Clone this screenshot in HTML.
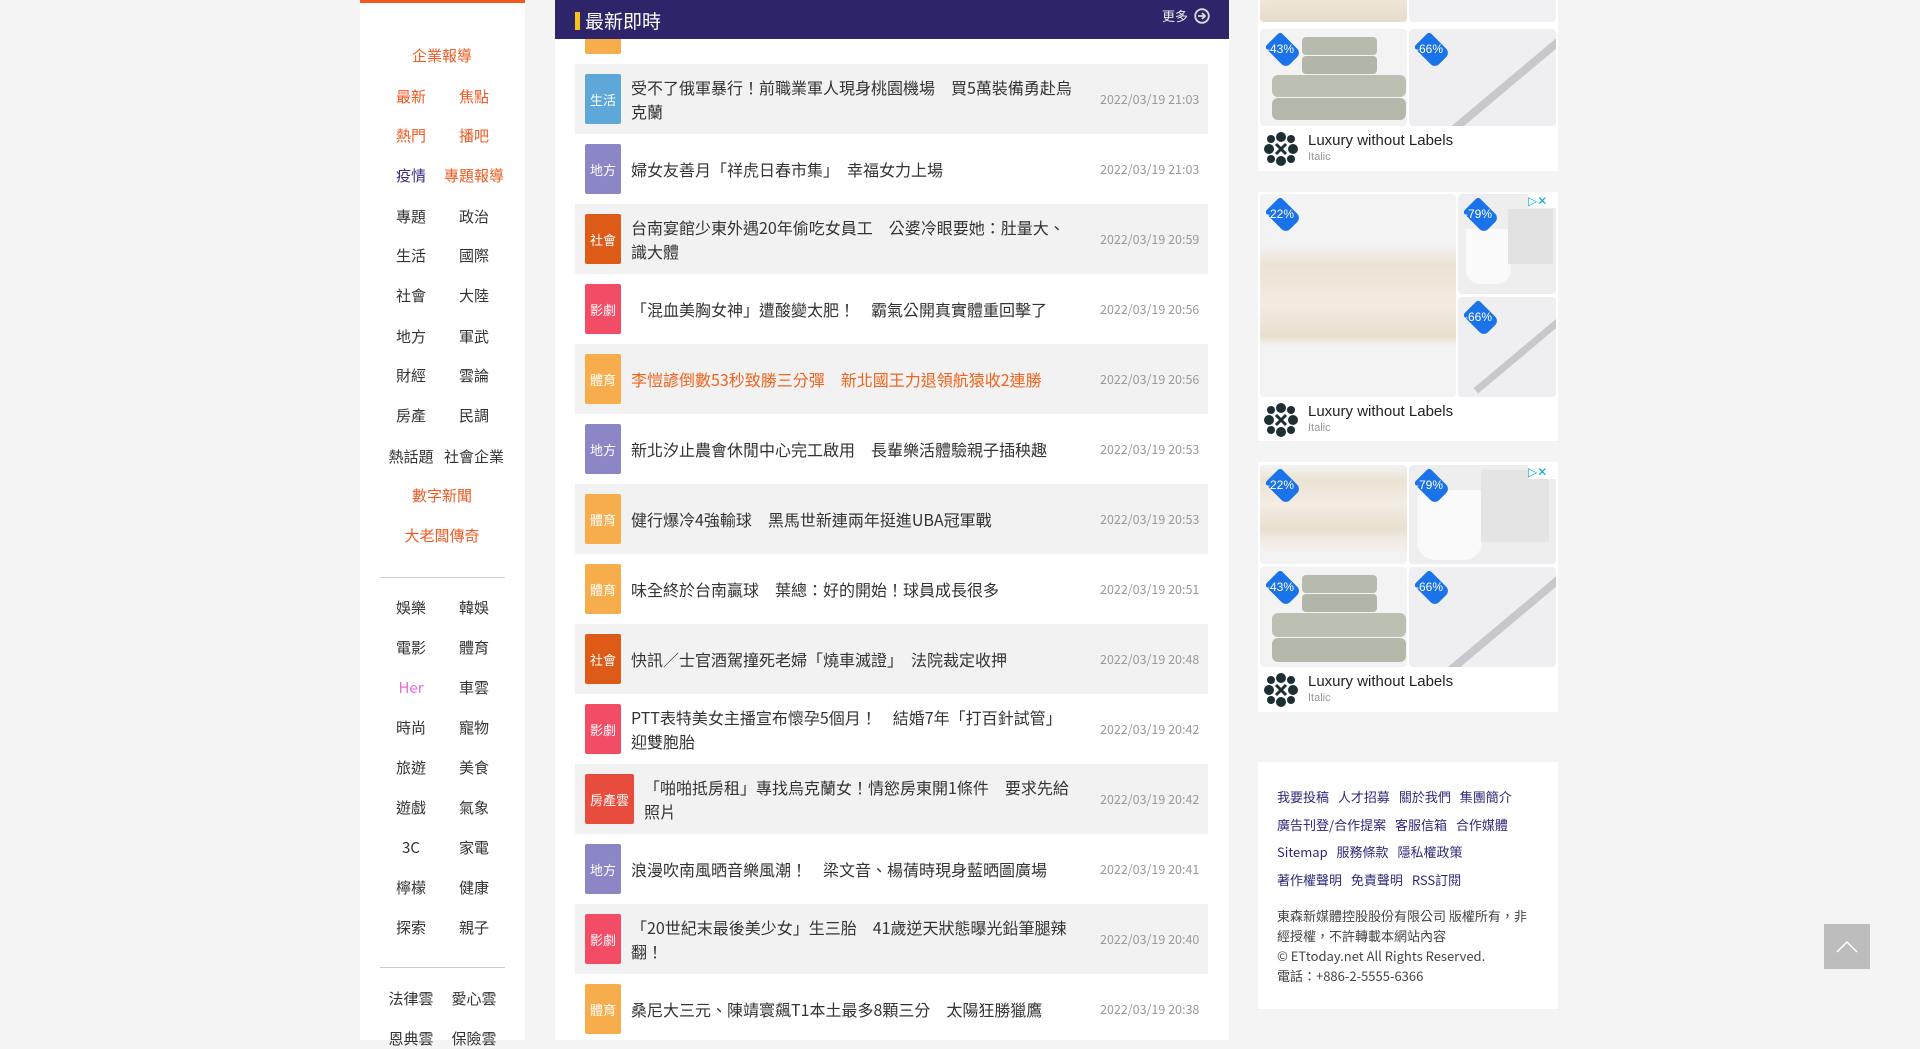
<!DOCTYPE html>
<html><head><meta charset="utf-8"><style>
*{margin:0;padding:0;box-sizing:border-box}
body{width:1920px;height:1040px;overflow:hidden;background:#f4f4f4;font-family:"Noto Sans CJK TC","Liberation Sans",sans-serif;position:relative}
.abs{position:absolute}
#side{left:360px;top:0;width:165px;height:1040px;background:#fff}
#side .bar{left:0;top:0;width:165px;height:3px;background:#f05a1e}
.si{position:absolute;font-size:15px;line-height:20px;color:#333;transform:translate(-50%,-50%);white-space:nowrap}
.or{color:#ef5a22}.pu{color:#3a2d84}.pk{color:#e96ae0}
.hr{position:absolute;left:20px;width:125px;height:1px;background:#ccc}
#main{left:555px;top:0;width:674px;height:1040px;background:#fff}
#hd{left:0;top:0;width:674px;height:39px;background:#2d2469}
#hd .yb{left:20px;top:12px;width:5px;height:18px;background:#f7c21b}
#hd .t{left:30px;top:9px;color:#fff;font-size:19px;line-height:24px}
#hd .more{left:607px;top:7px;color:#eee;font-size:13px;line-height:18px}
.row{position:absolute;left:20px;width:633px;height:70px}
.row.g{background:#f2f2f2}
.tag{position:absolute;left:10px;top:10px;width:36px;height:50px;border-radius:2px;color:#fff;font-size:13px;display:flex;align-items:center;justify-content:center}
.tt{position:absolute;left:56px;font-size:16px;line-height:24px;color:#333;white-space:nowrap}
.dt{position:absolute;left:525px;top:26px;font-size:12.5px;line-height:18px;color:#999;white-space:nowrap}
.ad{position:absolute;left:1258px;width:300px;background:#fff}
.im{position:absolute;overflow:hidden;border-radius:4px;background:#efeff2}
.tg{position:absolute;left:4px;top:4px;width:36px;height:36px}
.tg::before{content:"";position:absolute;left:6px;top:2px;width:22px;height:30px;background:#1a73e8;border-radius:3px 3px 6px 6px;transform:rotate(-45deg);transform-origin:50% 50%;left:8px;top:2px}
.tg span{position:absolute;left:2px;top:9px;color:#fff;font-family:"Liberation Sans",sans-serif;font-size:12px;line-height:14px}
.brand{position:absolute;left:0;width:300px;height:45px}
.brand .n{position:absolute;left:50px;top:6px;font-size:15px;color:#222;font-family:"Liberation Sans",sans-serif}
.brand .s{position:absolute;left:50px;top:25px;font-size:11px;color:#999;font-family:"Liberation Sans",sans-serif}
.foot{left:1258px;top:762px;width:300px;height:247px;background:#fff}
.fl{position:absolute;left:19px;font-size:13px;line-height:18px;color:#2d2a7a;white-space:nowrap;word-spacing:6px}
.fc{position:absolute;left:19px;top:144px;font-size:13px;color:#444;line-height:20px}
</style></head><body>
<div id="side" class="abs">
<div class="abs bar"></div>
<div class="si or" style="left:82px;top:56px">企業報導</div>
<div class="si or" style="left:51px;top:97px">最新</div><div class="si or" style="left:114px;top:97px">焦點</div>
<div class="si or" style="left:51px;top:136px">熱門</div><div class="si or" style="left:114px;top:136px">播吧</div>
<div class="si pu" style="left:51px;top:176px">疫情</div><div class="si or" style="left:114px;top:176px">專題報導</div>
<div class="si" style="left:51px;top:217px">專題</div><div class="si" style="left:114px;top:217px">政治</div>
<div class="si" style="left:51px;top:256px">生活</div><div class="si" style="left:114px;top:256px">國際</div>
<div class="si" style="left:51px;top:296px">社會</div><div class="si" style="left:114px;top:296px">大陸</div>
<div class="si" style="left:51px;top:337px">地方</div><div class="si" style="left:114px;top:337px">軍武</div>
<div class="si" style="left:51px;top:376px">財經</div><div class="si" style="left:114px;top:376px">雲論</div>
<div class="si" style="left:51px;top:416px">房產</div><div class="si" style="left:114px;top:416px">民調</div>
<div class="si" style="left:51px;top:457px">熱話題</div><div class="si" style="left:114px;top:457px">社會企業</div>
<div class="si or" style="left:82px;top:496px">數字新聞</div>
<div class="si or" style="left:82px;top:536px">大老闆傳奇</div>
<div class="hr" style="top:577px"></div>
<div class="si" style="left:51px;top:608px">娛樂</div><div class="si" style="left:114px;top:608px">韓娛</div>
<div class="si" style="left:51px;top:648px">電影</div><div class="si" style="left:114px;top:648px">體育</div>
<div class="si pk" style="left:51px;top:688px">Her</div><div class="si" style="left:114px;top:688px">車雲</div>
<div class="si" style="left:51px;top:728px">時尚</div><div class="si" style="left:114px;top:728px">寵物</div>
<div class="si" style="left:51px;top:768px">旅遊</div><div class="si" style="left:114px;top:768px">美食</div>
<div class="si" style="left:51px;top:808px">遊戲</div><div class="si" style="left:114px;top:808px">氣象</div>
<div class="si" style="left:51px;top:848px">3C</div><div class="si" style="left:114px;top:848px">家電</div>
<div class="si" style="left:51px;top:888px">檸檬</div><div class="si" style="left:114px;top:888px">健康</div>
<div class="si" style="left:51px;top:928px">探索</div><div class="si" style="left:114px;top:928px">親子</div>
<div class="hr" style="top:967px"></div>
<div class="si" style="left:51px;top:999px">法律雲</div><div class="si" style="left:114px;top:999px">愛心雲</div>
<div class="si" style="left:51px;top:1039px">恩典雲</div><div class="si" style="left:114px;top:1039px">保險雲</div>
</div>

<div id="main" class="abs">
<div class="tag" style="left:30px;top:4px;height:50px;background:#f8ad4d"></div>
<div class="row g" style="top:64px"><div class="tag" style="background:#5ea8d9">生活</div><div class="tt" style="top:11px">受不了俄軍暴行！前職業軍人現身桃園機場　買5萬裝備勇赴烏<br>克蘭</div><div class="dt">2022/03/19 21:03</div></div>
<div class="row" style="top:134px"><div class="tag" style="background:#8b87c6">地方</div><div class="tt" style="top:23px">婦女友善月「祥虎日春市集」　幸福女力上場</div><div class="dt">2022/03/19 21:03</div></div>
<div class="row g" style="top:204px"><div class="tag" style="background:#dd5a17">社會</div><div class="tt" style="top:11px">台南宴館少東外遇20年偷吃女員工　公婆冷眼要她：肚量大、<br>識大體</div><div class="dt">2022/03/19 20:59</div></div>
<div class="row" style="top:274px"><div class="tag" style="background:#f24c66">影劇</div><div class="tt" style="top:23px">「混血美胸女神」遭酸變太肥！　霸氣公開真實體重回擊了</div><div class="dt">2022/03/19 20:56</div></div>
<div class="row g" style="top:344px"><div class="tag" style="background:#f8ad4d">體育</div><div class="tt" style="top:23px;color:#f0641e">李愷諺倒數53秒致勝三分彈　新北國王力退領航猿收2連勝</div><div class="dt">2022/03/19 20:56</div></div>
<div class="row" style="top:414px"><div class="tag" style="background:#8b87c6">地方</div><div class="tt" style="top:23px">新北汐止農會休閒中心完工啟用　長輩樂活體驗親子插秧趣</div><div class="dt">2022/03/19 20:53</div></div>
<div class="row g" style="top:484px"><div class="tag" style="background:#f8ad4d">體育</div><div class="tt" style="top:23px">健行爆冷4強輸球　黑馬世新連兩年挺進UBA冠軍戰</div><div class="dt">2022/03/19 20:53</div></div>
<div class="row" style="top:554px"><div class="tag" style="background:#f8ad4d">體育</div><div class="tt" style="top:23px">味全終於台南贏球　葉總：好的開始！球員成長很多</div><div class="dt">2022/03/19 20:51</div></div>
<div class="row g" style="top:624px"><div class="tag" style="background:#dd5a17">社會</div><div class="tt" style="top:23px">快訊／士官酒駕撞死老婦「燒車滅證」　法院裁定收押</div><div class="dt">2022/03/19 20:48</div></div>
<div class="row" style="top:694px"><div class="tag" style="background:#f24c66">影劇</div><div class="tt" style="top:11px">PTT表特美女主播宣布懷孕5個月！　結婚7年「打百針試管」<br>迎雙胞胎</div><div class="dt">2022/03/19 20:42</div></div>
<div class="row g" style="top:764px"><div class="tag" style="background:#e84c3d;width:49px">房產雲</div><div class="tt" style="top:11px;left:69px">「啪啪抵房租」專找烏克蘭女！情慾房東開1條件　要求先給<br>照片</div><div class="dt">2022/03/19 20:42</div></div>
<div class="row" style="top:834px"><div class="tag" style="background:#8b87c6">地方</div><div class="tt" style="top:23px">浪漫吹南風晒音樂風潮！　梁文音、楊蒨時現身藍晒圖廣場</div><div class="dt">2022/03/19 20:41</div></div>
<div class="row g" style="top:904px"><div class="tag" style="background:#f24c66">影劇</div><div class="tt" style="top:11px">「20世紀末最後美少女」生三胎　41歲逆天狀態曝光鉛筆腿辣<br>翻！</div><div class="dt">2022/03/19 20:40</div></div>
<div class="row" style="top:974px"><div class="tag" style="background:#f8ad4d">體育</div><div class="tt" style="top:23px">桑尼大三元、陳靖寰飆T1本土最多8顆三分　太陽狂勝獵鷹</div><div class="dt">2022/03/19 20:38</div></div>
<div id="hd" class="abs"><div class="abs yb"></div><div class="abs t">最新即時</div><div class="abs more">更多</div>
<svg class="abs" style="left:639px;top:8px" width="16" height="16" viewBox="0 0 16 16"><circle cx="8" cy="8" r="6.8" fill="none" stroke="#ddd" stroke-width="1.8"/><path d="M4 8h7M8 5l3 3-3 3" fill="none" stroke="#ddd" stroke-width="1.8"/></svg></div>
</div>

<!-- Ad 1 -->
<div class="ad" style="top:0;height:171px">
<div class="im" style="left:2px;top:-20px;width:147px;height:42px;background:linear-gradient(#f4efe6,#e8dccb)"></div>
<div class="im" style="left:151px;top:-20px;width:147px;height:42px;background:#f1f1f3"></div>
<div class="im" style="left:2px;top:29px;width:147px;height:97px;background:#f3f3f4"><div class="abs" style="left:42px;top:8px;width:75px;height:18px;background:#b7bbad;border-radius:4px"></div><div class="abs" style="left:42px;top:27px;width:75px;height:18px;background:#b2b6a8;border-radius:4px"></div><div class="abs" style="left:12px;top:46px;width:134px;height:22px;background:#bcc0b2;border-radius:6px"></div><div class="abs" style="left:12px;top:69px;width:134px;height:22px;background:#b4b8aa;border-radius:6px"></div><div class="tg"><span>-43%</span></div></div>
<div class="im" style="left:151px;top:29px;width:147px;height:97px"><div class="abs" style="left:20px;top:50px;width:160px;height:8px;background:#c8c8cc;transform:rotate(-40deg)"></div><div class="tg"><span>-66%</span></div></div>
<div class="brand" style="top:126px"><svg class="abs" style="left:5px;top:5px" width="36" height="36" viewBox="0 0 36 36" fill="#1d2e35"><circle cx="18" cy="6" r="5"/><circle cx="18" cy="30" r="5"/><circle cx="6" cy="18" r="5"/><circle cx="30" cy="18" r="5"/><circle cx="8" cy="8" r="4"/><circle cx="28" cy="8" r="4"/><circle cx="8" cy="28" r="4"/><circle cx="28" cy="28" r="4"/><path d="M13 13l10 10M23 13l-10 10" stroke="#1d2e35" stroke-width="3"/></svg><div class="n">Luxury without Labels</div><div class="s">Italic</div></div>
</div>

<!-- Ad 2 -->
<div class="ad" style="top:192px;height:249px">
<div class="im" style="left:2px;top:2px;width:196px;height:203px;background:linear-gradient(#f3f3f4 0,#f3f3f4 25%,#ece3d4 35%,#f1ebe2 55%,#e9dfcf 70%,#f3f3f4 75%)"><div class="tg"><span>-22%</span></div></div>
<div class="im" style="left:200px;top:2px;width:98px;height:100px;background:#eeeeef"><div class="abs" style="left:8px;top:35px;width:45px;height:55px;background:#fafafa;border-radius:0 0 14px 14px"></div><div class="abs" style="left:50px;top:15px;width:45px;height:55px;background:#e2e2e2"></div><div class="tg"><span>-79%</span></div></div>
<div class="im" style="left:200px;top:105px;width:98px;height:100px"><div class="abs" style="left:5px;top:55px;width:110px;height:7px;background:#c8c8cc;transform:rotate(-40deg)"></div><div class="tg"><span>-66%</span></div></div>
<div class="abs" style="left:270px;top:2px;width:28px;height:14px;background:#fff;color:#00aecd;font-size:12px;line-height:14px;font-family:'DejaVu Sans',sans-serif">▷✕</div>
<div class="brand" style="top:205px"><svg class="abs" style="left:5px;top:5px" width="36" height="36" viewBox="0 0 36 36" fill="#1d2e35"><circle cx="18" cy="6" r="5"/><circle cx="18" cy="30" r="5"/><circle cx="6" cy="18" r="5"/><circle cx="30" cy="18" r="5"/><circle cx="8" cy="8" r="4"/><circle cx="28" cy="8" r="4"/><circle cx="8" cy="28" r="4"/><circle cx="28" cy="28" r="4"/><path d="M13 13l10 10M23 13l-10 10" stroke="#1d2e35" stroke-width="3"/></svg><div class="n">Luxury without Labels</div><div class="s">Italic</div></div>
</div>

<!-- Ad 3 -->
<div class="ad" style="top:462px;height:250px">
<div class="im" style="left:2px;top:3px;width:147px;height:99px;background:linear-gradient(#f3f3f4 0,#ece3d4 15%,#f2ece3 40%,#e9dfcf 65%,#f0ebe3 75%,#f3f3f4 90%)"><div class="tg"><span>-22%</span></div></div>
<div class="im" style="left:151px;top:3px;width:147px;height:99px;background:#eeeeef"><div class="abs" style="left:8px;top:25px;width:65px;height:70px;background:#fafafa;border-radius:0 0 18px 18px"></div><div class="abs" style="left:72px;top:5px;width:68px;height:72px;background:#e4e4e4"></div><div class="tg"><span>-79%</span></div></div>
<div class="im" style="left:2px;top:105px;width:147px;height:100px;background:#f3f3f4"><div class="abs" style="left:42px;top:8px;width:75px;height:18px;background:#b7bbad;border-radius:4px"></div><div class="abs" style="left:42px;top:27px;width:75px;height:18px;background:#b2b6a8;border-radius:4px"></div><div class="abs" style="left:12px;top:46px;width:134px;height:24px;background:#bcc0b2;border-radius:6px"></div><div class="abs" style="left:12px;top:71px;width:134px;height:24px;background:#b4b8aa;border-radius:6px"></div><div class="tg"><span>-43%</span></div></div>
<div class="im" style="left:151px;top:105px;width:147px;height:100px"><div class="abs" style="left:20px;top:50px;width:160px;height:8px;background:#c8c8cc;transform:rotate(-40deg)"></div><div class="tg"><span>-66%</span></div></div>
<div class="abs" style="left:270px;top:3px;width:28px;height:14px;background:#fff;color:#00aecd;font-size:12px;line-height:14px;font-family:'DejaVu Sans',sans-serif">▷✕</div>
<div class="brand" style="top:205px"><svg class="abs" style="left:5px;top:5px" width="36" height="36" viewBox="0 0 36 36" fill="#1d2e35"><circle cx="18" cy="6" r="5"/><circle cx="18" cy="30" r="5"/><circle cx="6" cy="18" r="5"/><circle cx="30" cy="18" r="5"/><circle cx="8" cy="8" r="4"/><circle cx="28" cy="8" r="4"/><circle cx="8" cy="28" r="4"/><circle cx="28" cy="28" r="4"/><path d="M13 13l10 10M23 13l-10 10" stroke="#1d2e35" stroke-width="3"/></svg><div class="n">Luxury without Labels</div><div class="s">Italic</div></div>
</div>

<div class="abs foot">
<div class="fl" style="top:26px">我要投稿 人才招募 關於我們 集團簡介</div>
<div class="fl" style="top:54px">廣告刊登/合作提案 客服信箱 合作媒體</div>
<div class="fl" style="top:81px">Sitemap 服務條款 隱私權政策</div>
<div class="fl" style="top:109px">著作權聲明 免責聲明 RSS訂閱</div>
<div class="fc">東森新媒體控股股份有限公司 版權所有，非<br>經授權，不許轉載本網站內容<br>© ETtoday.net All Rights Reserved.<br>電話：+886-2-5555-6366</div>
</div>

<div class="abs" style="left:1824px;top:924px;width:46px;height:45px;background:#bdbdbd"><svg width="46" height="45"><path d="M13 28l10-10 10 10" fill="none" stroke="#fff" stroke-width="1.5"/></svg></div>
</body></html>
